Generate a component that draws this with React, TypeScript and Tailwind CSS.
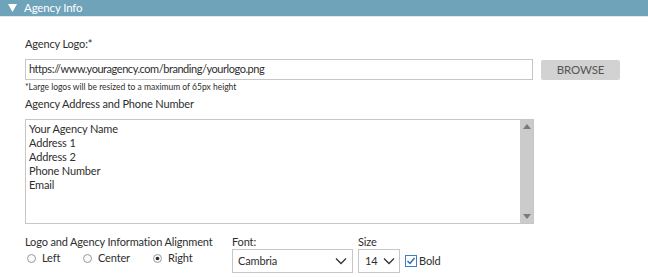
const Chevron = () => (
  <svg width="12" height="8" viewBox="0 0 12 8" className="shrink-0">
    <path d="M1 1.5 L6 6.5 L11 1.5" fill="none" stroke="#333" strokeWidth="1.3" />
  </svg>
);

const Radio = ({ label, checked }: { label: string; checked?: boolean }) => (
  <label className="flex items-center gap-[6px]">
    <svg width="9" height="9" viewBox="0 0 9 9">
      <circle cx="4.5" cy="4.5" r="4" fill="#fafafa" stroke="#9a9a9a" strokeWidth="1" />
      {checked && <circle cx="4.5" cy="4.5" r="1.8" fill="#2b2b2b" />}
    </svg>
    <span>{label}</span>
  </label>
);

export default function App() {
  return (
    <div
      className="w-[648px] h-[277px] bg-white text-[11px] tracking-[-0.15px] text-[#2e2e2e] overflow-hidden whitespace-nowrap"
      style={{ fontFamily: '"Segoe UI", Lato, sans-serif' }}
    >
      {/* header */}
      <div className="h-[17px] bg-[#6ea3ba] flex items-center pl-[8px] gap-[7px] text-white border-b border-[#dfe9ee]">
        <svg width="9" height="8" viewBox="0 0 9 8">
          <path d="M0 0 L9 0 L4.5 8 Z" fill="#fff" />
        </svg>
        <span className="text-[11.5px] leading-none">Agency Info</span>
      </div>

      <div className="pl-[25px] pt-[19px]">
        <div className="leading-[16px]">Agency Logo:*</div>

        <div className="flex items-center gap-[8px] mt-[7px]">
          <div className="w-[508px] h-[21px] border border-[#c6c6c6] flex items-center px-[3px] tracking-[-0.45px]">
            https://www.youragency.com/branding/yourlogo.png
          </div>
          <button className="w-[79px] h-[20px] bg-[#d2d2d2] text-[#555] text-[11.5px] rounded-[2px] leading-none">
            BROWSE
          </button>
        </div>
        <div className="text-[8.5px] tracking-normal leading-[12px] mt-[1px]">*Large logos will be resized to a maximum of 65px height</div>
        <div className="leading-[16px] mt-[3px]">Agency Address and Phone Number</div>

        <div className="w-[509px] h-[105px] border border-[#c6c6c6] mt-[7px] flex">
          <div className="flex-1 px-[3px] pt-[2px] leading-[14px]">
            <div>Your Agency Name</div>
            <div>Address 1</div>
            <div>Address 2</div>
            <div>Phone Number</div>
            <div>Email</div>
          </div>
          <div className="w-[13px] bg-[#cbcbcb] flex flex-col justify-between items-center py-[4px]">
            <svg width="8" height="5" viewBox="0 0 8 5"><path d="M0 5 L4 0 L8 5 Z" fill="#7a7a7a" /></svg>
            <svg width="8" height="5" viewBox="0 0 8 5"><path d="M0 0 L4 5 L8 0 Z" fill="#7a7a7a" /></svg>
          </div>
        </div>

        <div className="flex mt-[10px]">
          <div className="w-[207px]">
            <div className="leading-[16px]">Logo and Agency Information Alignment</div>
            <div className="flex items-center pl-[2px] leading-[16px]">
              <div className="w-[56px]"><Radio label="Left" /></div>
              <div className="w-[70px]"><Radio label="Center" /></div>
              <Radio label="Right" checked />
            </div>
          </div>
          <div className="w-[126px]">
            <div className="leading-[16px]">Font:</div>
            <div className="w-[121px] h-[24px] border border-[#c6c6c6] -mt-[1px] flex items-center justify-between pl-[5px] pr-[5px]">
              <span>Cambria</span>
              <Chevron />
            </div>
          </div>
          <div>
            <div className="leading-[16px]">Size</div>
            <div className="flex items-center gap-[5px] -mt-[1px]">
              <div className="w-[42px] h-[24px] border border-[#c6c6c6] flex items-center justify-between pl-[6px] pr-[4px]">
                <span>14</span>
                <Chevron />
              </div>
              <label className="flex items-center gap-[2px]">
                <svg width="12" height="12" viewBox="0 0 12 12">
                  <rect x="0.5" y="0.5" width="11" height="11" fill="#fff" stroke="#3c7fc4" />
                  <path d="M2.5 6 L5 8.5 L9.5 3" fill="none" stroke="#2a6fbd" strokeWidth="1.5" />
                </svg>
                <span>Bold</span>
              </label>
            </div>
          </div>
        </div>
      </div>
    </div>
  );
}
